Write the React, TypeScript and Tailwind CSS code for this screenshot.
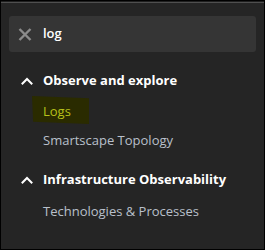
import React from "react";

const Chevron = () => (
  <svg width="12" height="8" viewBox="0 0 12 8" className="shrink-0">
    <path d="M1.5 6.5 L6 2 L10.5 6.5" fill="none" stroke="#ffffff" strokeWidth="2" strokeLinecap="square" />
  </svg>
);

export default function App() {
  return (
    <div
      className="w-[265px] h-[250px] border border-black bg-[#252525] flex flex-col overflow-hidden"
      style={{ fontFamily: '"Open Sans", "Noto Sans", sans-serif' }}
    >
      <div className="h-px bg-[#1f1f1f]" />
      <div className="h-px bg-[#4f4f4f]" />
      <div className="mt-[13px] mx-[8px] h-[36px] rounded-[3px] bg-[#353535] flex items-center">
        <svg width="14" height="13" viewBox="0 0 14 13" className="ml-[9px] mr-[11px]">
          <path d="M1.5 1 L12.5 12 M12.5 1 L1.5 12" stroke="#8c8c8c" strokeWidth="2.4" />
        </svg>
        <span className="text-white text-[13px] font-semibold">log</span>
      </div>
      <div className="mt-[20px] flex items-center h-[18px]">
        <div className="w-[42px] flex justify-end pr-[10px]">
          <Chevron />
        </div>
        <span className="text-white text-[13px] font-bold">Observe and explore</span>
      </div>
      <div className="mt-[12px] relative h-[20px] flex items-center">
        <div className="absolute left-[31px] top-[-6px] w-[57px] h-[28px] bg-[#2a2b00] [clip-path:polygon(0_0,100%_8%,100%_100%,2%_92%)]" />
        <span className="relative ml-[42px] text-[#b7c11a] text-[13px]">Logs</span>
      </div>
      <div className="mt-[9px] h-[20px] flex items-center">
        <span className="ml-[42px] text-[#b9c0cb] text-[13px]">Smartscape Topology</span>
      </div>
      <div className="mt-[20px] flex items-center h-[18px]">
        <div className="w-[42px] flex justify-end pr-[10px]">
          <Chevron />
        </div>
        <span className="text-white text-[13px] font-bold">Infrastructure Observability</span>
      </div>
      <div className="mt-[13px] h-[20px] flex items-center">
        <span className="ml-[42px] text-[#b9c0cb] text-[13px]">Technologies &amp; Processes</span>
      </div>
    </div>
  );
}
